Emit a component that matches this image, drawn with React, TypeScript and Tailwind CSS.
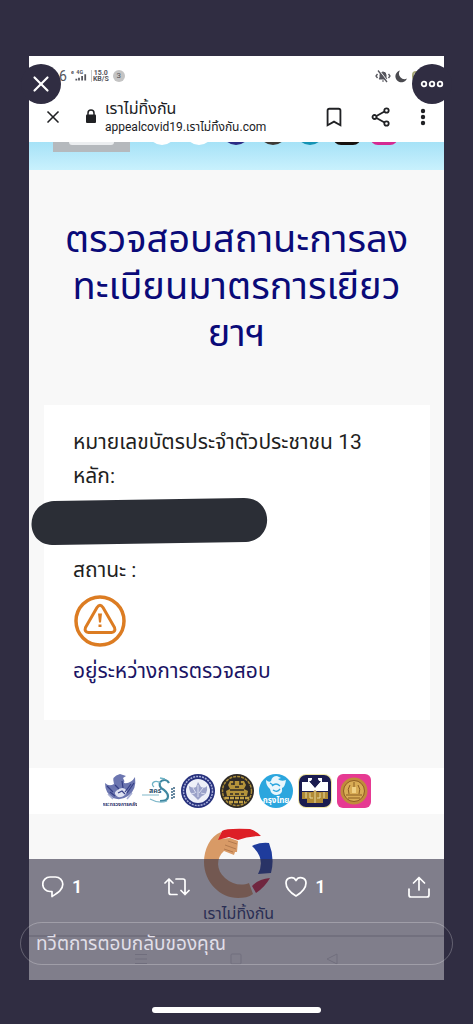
import type { ReactNode } from "react";
import { Bookmark, X } from "lucide-react";

type iconButtonProps = {
    label: string;
    className?: string;
    children: ReactNode;
};

function IconButton({ label, className = "", children }: iconButtonProps) {
    return (
        <button type="button" aria-label={label} className={`flex items-center justify-center cursor-pointer ${className}`}>
            {children}
        </button>
    );
}

// small logos cut off under the browser toolbar
const hiddenLogos: { id: string; className: string }[] = [
    { id: "treasury", className: "bg-white rounded-full" },
    { id: "fiscal", className: "bg-white rounded-full" },
    { id: "ministry", className: "bg-[#2b2d86] rounded-full" },
    { id: "budget", className: "bg-[#3d3a36] rounded-full" },
    { id: "krungthai", className: "bg-[#1593b4] rounded-full" },
    { id: "baac", className: "bg-[#17120f] rounded-lg" },
    { id: "gsb", className: "bg-[#d42a92] rounded-lg" },
];

function StatusBar() {
    return (
        <div className="h-10 pl-[30px] pr-4 flex items-center justify-between text-[#55555c]">
            <div className="flex items-center gap-1">
                <span className="text-sm">6</span>
                <svg width="16" height="14" viewBox="0 0 18 14" fill="currentColor">
                    <text x="0" y="5" fontSize="6" fontWeight="bold">e</text>
                    <text x="6" y="5" fontSize="6" fontWeight="bold">4G</text>
                    <path d="M5 10h2v2H5zM8 9h2v3H8zM11.500 7h2v5h-2zM15 5h2v7h-2z" />
                </svg>
                <div className="border-l border-[#c9c9c9] pl-px flex flex-col items-center font-bold text-[7px] leading-[6px]">
                    <span>15.0</span>
                    <span>KB/S</span>
                </div>
                <span className="size-3 rounded-full bg-[#c4c4c4] text-[8px] leading-3 text-center">3</span>
            </div>
            <div className="flex items-center gap-1">
                <svg width="16" height="14" viewBox="0 0 16 14" fill="none" stroke="currentColor">
                    <path d="M4 10c1-1 1-2 1-4a3 3 0 0 1 6 0c0 2 0 3 1 4zM7 12h2" fill="currentColor" />
                    <path d="M2.500 5L1 7l1.500 2M13.500 5L15 7l-1.500 2" strokeWidth="1.300" />
                    <path d="M4 1l9 12" stroke="#fff" strokeWidth="1.200" />
                    <path d="M3 1.500l9 11.500" strokeWidth="1.300" />
                </svg>
                <svg width="13" height="14" viewBox="0 0 13 14" fill="#4a4a4f">
                    <path d="M5 1.500A6 6 0 1 0 12 9.500 5.500 5.500 0 0 1 5 1.500z" />
                </svg>
                <span className="w-4 h-[10px] rounded-sm border-2 border-[#a7a777]" />
            </div>
        </div>
    );
}

function BrowserBar() {
    return (
        <div className="h-[46px] pl-[14px] pr-[11px] pb-[5px] flex items-center text-[#202124]">
            <IconButton label="ปิดแท็บ">
                <X size={20} strokeWidth={2} />
            </IconButton>
            <svg className="ml-[22px]" width="12" height="15" viewBox="0 0 12 15" fill="none">
                <path d="M3 6V4a3 3 0 0 1 6 0v2" stroke="#202124" strokeWidth="1.500" />
                <rect x="1" y="5.500" width="10" height="8.500" rx="1" fill="#202124" />
            </svg>
            <div className="ml-2 flex-1 min-w-0 flex flex-col whitespace-nowrap">
                <span className="text-base leading-5">เราไม่ทิ้งกัน</span>
                <span className="text-xs leading-4">appealcovid19.เราไม่ทิ้งกัน.com</span>
            </div>
            <IconButton label="บุ๊กมาร์ก">
                <Bookmark size={22} strokeWidth={2} strokeLinejoin="miter" />
            </IconButton>
            <IconButton label="แชร์" className="ml-[26px]">
                <svg width="20" height="20" viewBox="0 0 20 20" fill="none" stroke="currentColor" strokeWidth="1.800">
                    <circle cx="3.500" cy="10" r="2" />
                    <circle cx="15.500" cy="3.500" r="2.200" />
                    <circle cx="15.500" cy="16.500" r="2.200" />
                    <path d="M5.500 9L13.500 4.500M5.500 11l8 4.500" />
                </svg>
            </IconButton>
            <IconButton label="เมนู" className="ml-[22px]">
                <svg width="20" height="18" viewBox="0 0 20 18" fill="currentColor">
                    <circle cx="10" cy="3" r="2.200" />
                    <circle cx="10" cy="9" r="2.200" />
                    <circle cx="10" cy="15" r="2.200" />
                </svg>
            </IconButton>
        </div>
    );
}

function SiteBanner() {
    return (
        <div className="h-7 pl-6 flex items-start bg-linear-to-b from-[#a6e2f7] to-[#c9f1fd] overflow-hidden">
            <div className="w-[77px] h-[10px] px-4 bg-[#b5b9bd]">
                <div className="h-[3px] rounded-b-sm bg-[#eceef0]" />
            </div>
            <div className="ml-[18px] flex gap-[9px]">
                {
                    hiddenLogos.map((logo)=>
                        <span key={logo.id} className={`size-7 -mt-[25px] ${logo.className}`} />
                    )
                }
            </div>
        </div>
    );
}

function StatusCard() {
    return (
        <section className="mx-[14px] ml-[15px] mt-12 px-[29px] pt-5 pb-8 bg-white text-[#1f1f22] text-[21px] leading-[34px]">
            <p className="whitespace-nowrap">หมายเลขบัตรประจำตัวประชาชน 13<br />หลัก:</p>
            <svg className="-ml-[43px] mt-1" width="238" height="48" viewBox="0 0 238 48" fill="#2b2e36">
                <path d="M24 4L214 1C244 1 245 43 216 45L24 48C-6 49-6 6 24 4z" />
            </svg>
            <p className="mt-2">สถานะ :</p>
            <svg className="mt-2 ml-px" width="52" height="52" viewBox="0 0 52 52" fill="none" stroke="#dc7c22" strokeLinejoin="round">
                <circle cx="26" cy="26" r="24" strokeWidth="3.500" />
                <path d="M23 12.500Q26 8 29 12.500L40.500 32.500Q42 37 37.500 37.500H14.500Q10 37 11.500 32.500z" strokeWidth="3" />
                <path d="M24 18.500h4l-1 9h-2zM24.500 29.500h3v2.500h-3z" fill="#dc7c22" stroke="none" />
            </svg>
            <p className="mt-[7px] text-[#1b1464]">อยู่ระหว่างการตรวจสอบ</p>
        </section>
    );
}

function PartnerLogos() {
    return (
        <div className="mt-12 h-[46px] bg-white flex items-center justify-center gap-[5px]">
            {/* Ministry bird */}
            <svg width="34" height="36" viewBox="0 0 34 36">
                <path d="M2 10Q6 14 11 11Q8 3 17 1L23 3L20 5Q22 8 21 10Q28 11 32 4Q34 17 25 23Q18 28 10 25Q2 20 2 10z" fill="#6c76b0" />
                <path d="M13 18Q20 12 24 18Q22 25 15 24Q10 21 13 18z" fill="#dfe2f2" />
                <path d="M4 13l6 6M28 11l-6 8M12 12l4 4M19 8l1 7M7 19l5 4M31 10l-7 10M15 20l4-2 3 3" stroke="#353f86" strokeWidth="1.200" fill="none" />
                <path d="M5 21l5 5M29 20l-5 6" stroke="#a8afd4" strokeWidth="1.500" />
                <text x="17" y="33" fontSize="5" fontWeight="bold" fill="#34396f" textAnchor="middle">กระทรวงการคลัง</text>
            </svg>
            {/* SEPO swirl */}
            <svg width="34" height="34" viewBox="0 0 34 34" fill="none">
                <path d="M27 9C24 3 14 7 19 14C28 19 29 27 18 27" stroke="#3f87a0" strokeWidth="2.200" />
                <path d="M19 9C12 5 8 10 12 13M18 4l5 1" stroke="#6fb3c6" strokeWidth="1.300" />
                <path d="M0 21h17M8 25q9 5 17 2" stroke="#80b8ca" strokeWidth="1.200" />
                <text x="7" y="19" fontSize="7" fontWeight="bold" fill="#31536f">สคร</text>
                <path d="M30 14v11M32 13v11" stroke="#3a6684" strokeWidth="1.500" strokeDasharray="2 1" />
            </svg>
            {/* Ministry of Finance seal */}
            <svg width="34" height="34" viewBox="0 0 34 34">
                <circle cx="17" cy="17" r="17" fill="#26307c" />
                <circle cx="17" cy="17" r="14.500" fill="none" stroke="#a9b0da" strokeWidth="1.500" strokeDasharray="2 1" />
                <circle cx="17" cy="17" r="12" fill="#eef0f8" />
                <path d="M8 12q4 3 7 1l2-5 3 5q4 2 6-1 1 8-5 10l-4 4-4-4q-5-3-5-10z" fill="#9aa1c8" />
                <path d="M12 14l3 5M22 14l-4 5M17 11v12M10 20l4-1M24 20l-4-1" stroke="#d9ddef" />
            </svg>
            {/* Gold on black seal */}
            <svg width="34" height="34" viewBox="0 0 34 34">
                <circle cx="17" cy="17" r="17" fill="#2d2925" />
                <circle cx="17" cy="17" r="14.500" fill="none" stroke="#a98b38" strokeWidth="1.500" strokeDasharray="3 1" />
                <path d="M10 7h14l2 4-2 4 4 2-1 5H7l-1-5 4-2-2-4z" fill="#b4933a" />
                <path d="M11 10h3M20 10h3M10 16h14M14 7v4M20 7v4M10 20h3M15 20h4M21 20h3M15 13h4" stroke="#2d2925" strokeWidth="1.500" />
                <path d="M5 24h24M9 28h16" stroke="#c3a247" strokeWidth="2.500" strokeDasharray="4 1" />
            </svg>
            {/* Krungthai */}
            <svg width="34" height="34" viewBox="0 0 34 34">
                <circle cx="17" cy="17" r="17" fill="#2ba6de" />
                <path d="M7 6q3 3 5 1 1-5 6-5l4 2-3 1q3 3 8 1-1 7-4 8 1 6-5 7-6 0-7-6Q7 12 7 6z" fill="#e9f6fc" />
                <path d="M13 12q4-4 8 0M14 16q4 3 7-1M11 9l3 2" stroke="#2ba6de" strokeWidth="1.300" fill="none" />
                <text x="17" y="29" fontSize="8" fontWeight="bold" fill="#fff" textAnchor="middle">กรุงไทย</text>
            </svg>
            {/* BAAC */}
            <svg width="34" height="34" viewBox="0 0 34 34">
                <rect width="34" height="34" rx="8" fill="#efe6a5" />
                <rect x="1" y="1" width="32" height="32" rx="7" fill="#1b1c50" />
                <path d="M4 8h6V4h5l-3 4 5 6 5-6-3-4h5v4h6v9H4z" fill="#fff" />
                <path d="M14 4h6v3h3l-6 6-6-6h3z" fill="#1b1c50" />
                <path d="M4 18h11l2-2 2 2h11v7h-5v4H9v-4H4z" fill="#b08a35" />
                <path d="M17 17v12M12 19v5h3M22 19v5h-3M8 18v6M26 18v6" stroke="#e7d8a0" strokeWidth="1" fill="none" />
            </svg>
            {/* Government savings bank */}
            <svg width="34" height="34" viewBox="0 0 34 34">
                <rect width="34" height="34" rx="6" fill="#e63a92" />
                <circle cx="17" cy="17" r="13.500" fill="#c08b3c" />
                <circle cx="17" cy="17" r="10.500" fill="#d9ac55" stroke="#8f5d24" strokeWidth="1" />
                <path d="M17 8v11M13 11q-3 4-1 9M21 11q3 4 1 9M9 21h16M11 24h12" stroke="#8a5c22" strokeWidth="1" fill="none" />
                <path d="M15 13h4v6h-4z" fill="#f0d083" />
            </svg>
        </div>
    );
}

function SiteFooter() {
    return (
        <div className="pt-[14px] pl-1 flex flex-col items-center">
            <svg width="70" height="70" viewBox="0 0 70 70">
                <path d="M17 4C6 8 0 22 0 34C0 54 16 70 34 70C40 70 45 69 49 66L45 55C38 58 29 57 21 50C12 42 12 30 20 23L30 27L31 24L33 24L34 13L26 10L16 11z" fill="#d89a66" />
                <path d="M14 12L18 3Q22 0 46 1Q54 4 57 8Q44 8 34 12L25 9z" fill="#dd1f26" />
                <path d="M24 13l9 3M21 17l11 4M20 21l9 3" stroke="#b37a4e" strokeWidth="1" />
                <path d="M48 18Q56 14 65 15Q71 30 67 45L54 46Q62 31 48 18z" fill="#1f3c9c" />
                <path d="M48 58Q54 51 66 50Q61 59 52 65z" fill="#d01c3a" />
            </svg>
            <p className="mt-1 text-base leading-6 text-[#22306e] whitespace-nowrap">เราไม่ทิ้งกัน</p>
        </div>
    );
}

function AndroidNav() {
    return (
        <div className="mt-[9px] h-[45px] border-t-2 border-[#d4d4d8] flex items-center justify-around px-16 text-[#d0d0d4]">
            <svg width="12" height="12" viewBox="0 0 12 12" fill="none" stroke="currentColor"><path d="M0 1.500h12M0 6h12M0 10.500h12" /></svg>
            <svg width="12" height="12" viewBox="0 0 12 12" fill="none" stroke="currentColor"><rect x="1" y="1" width="10" height="10" rx="1" /></svg>
            <svg width="12" height="12" viewBox="0 0 12 12" fill="none" stroke="currentColor"><path d="M11 1v10L1 6z" /></svg>
        </div>
    );
}

function TweetActions() {
    return (
        <div className="px-[42px] pt-[14px] grid grid-cols-[1fr_1fr_1fr_auto] items-center text-white text-lg font-semibold">
            <IconButton label="ตอบกลับ" className="justify-self-start gap-2">
                <svg width="22" height="24" viewBox="0 0 22 24" fill="none" stroke="currentColor" strokeWidth="1.700" strokeLinejoin="round">
                    <path d="M8 2h5.500a7.300 7.300 0 0 1 7.300 7.300c0 5.700-5.300 8.700-10.800 12.200v-5H8A7.200 7.200 0 0 1 8 2z" />
                </svg>
                <span>1</span>
            </IconButton>
            <IconButton label="รีทวีต" className="justify-self-start">
                <svg width="26" height="22" viewBox="0 0 26 22" fill="none" stroke="currentColor" strokeWidth="1.700" strokeLinecap="round" strokeLinejoin="round">
                    <path d="M1 7l4-4 4 4M5 3v13.500a2 2 0 0 0 2 2h6M12 3h7a2 2 0 0 1 2 2v13.500M17 14.500l4 4 4-4" />
                </svg>
            </IconButton>
            <IconButton label="ถูกใจ" className="justify-self-start gap-2">
                <svg width="22" height="22" viewBox="0 0 22 22" fill="none" stroke="currentColor" strokeWidth="1.700" strokeLinejoin="round">
                    <path d="M11 20C6 17 1 12 1 7a5.300 5.300 0 0 1 10-2.500A5.300 5.300 0 0 1 21 7c0 5-5 10-10 13z" />
                </svg>
                <span>1</span>
            </IconButton>
            <IconButton label="แชร์ทวีต">
                <svg width="24" height="24" viewBox="0 0 24 24" fill="none" stroke="currentColor" strokeWidth="1.700" strokeLinecap="round" strokeLinejoin="round">
                    <path d="M12 15V2.500M6.500 8L12 2.500 17.500 8M2 14v6a2 2 0 0 0 2 2h16a2 2 0 0 0 2-2v-6" />
                </svg>
            </IconButton>
        </div>
    );
}

export default function App() {
    return (
        <div className="relative min-h-screen bg-[#302d42] px-[29px] pt-14 pb-11 font-[Roboto,'Noto_Sans_Thai','Noto_Sans',sans-serif]">
            <main className="bg-[#f8f8f8] overflow-hidden">
                <div className="bg-white">
                    <StatusBar />
                    <BrowserBar />
                </div>
                <SiteBanner />
                <h1 className="mt-[46px] text-center text-[38px] leading-[47px] text-[#0a0a78] whitespace-nowrap">
                    ตรวจสอบสถานะการลง<br />ทะเบียนมาตรการเยียว<br />ยาฯ
                </h1>
                <StatusCard />
                <PartnerLogos />
                <SiteFooter />
                <AndroidNav />
            </main>

            {/* viewer controls floating over the photo */}
            <IconButton label="ปิด" className="absolute top-16 left-[21px] size-10 rounded-full bg-[#302d42] text-white">
                <X size={26} strokeWidth={2} />
            </IconButton>
            <IconButton label="เพิ่มเติม" className="absolute top-16 right-[21px] size-10 rounded-full bg-[#302d42] text-white">
                <svg width="24" height="8" viewBox="0 0 24 8" fill="none" stroke="currentColor" strokeWidth="1.800">
                    <circle cx="4" cy="4" r="2.300" />
                    <circle cx="12" cy="4" r="2.300" />
                    <circle cx="20" cy="4" r="2.300" />
                </svg>
            </IconButton>

            <div className="absolute inset-x-0 bottom-0 h-[165px] bg-[#302d42]/60 flex flex-col">
                <TweetActions />
                <div className="mt-[21px] mx-5">
                    <input
                        type="text"
                        aria-label="ทวีตการตอบกลับของคุณ"
                        placeholder="ทวีตการตอบกลับของคุณ"
                        className="w-full h-[43px] px-[15px] rounded-full border border-white/25 bg-transparent text-[19px] text-white placeholder:text-[#e0dfe8] outline-none"
                    />
                </div>
                <div className="mt-auto mb-[11px] mx-auto w-[169px] h-[6px] rounded-full bg-white" />
            </div>
        </div>
    );
}
